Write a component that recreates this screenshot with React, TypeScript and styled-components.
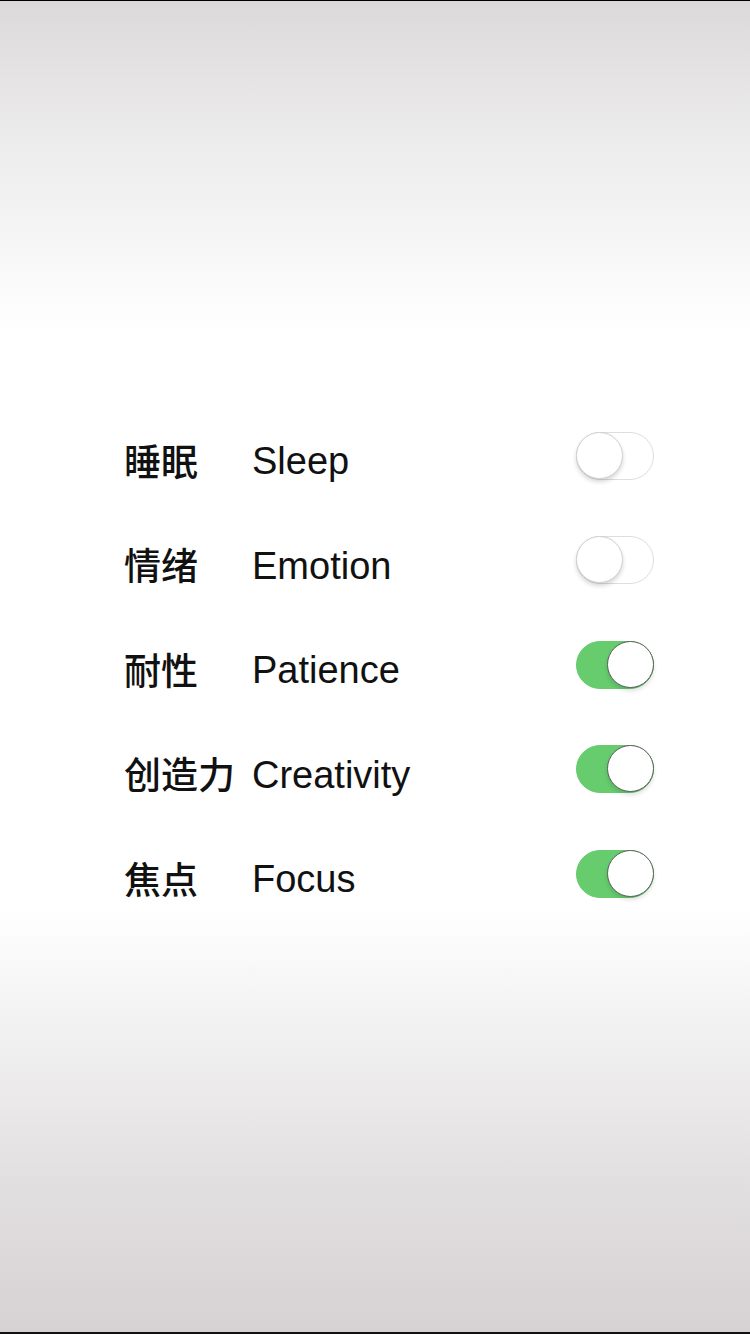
import styled, {createGlobalStyle} from "styled-components";

const GlobalStyle = createGlobalStyle`
    html, body {
        margin: 0;
        padding: 0;
    }
    body {
        font-family: "Liberation Sans", "Noto Sans CJK SC", sans-serif;
        -webkit-font-smoothing: antialiased;
    }
`;

interface Setting {
    zh: string;
    en: string;
    on: boolean;
}

const settings: Setting[] = [
    {zh: "睡眠", en: "Sleep", on: false},
    {zh: "情绪", en: "Emotion", on: false},
    {zh: "耐性", en: "Patience", on: true},
    {zh: "创造力", en: "Creativity", on: true},
    {zh: "焦点", en: "Focus", on: true},
];

export default function App() {
    return <>
        <GlobalStyle />
        <Screen>
            <List>
                {settings.map(s => (
                    <Row key={s.en}>
                        <ZhLabel>{s.zh}</ZhLabel>
                        <EnLabel>{s.en}</EnLabel>
                        <Switch $on={s.on}>
                            <Knob $on={s.on} />
                        </Switch>
                    </Row>
                ))}
            </List>
        </Screen>
    </>;
}

const Screen = styled.div`
    box-sizing: border-box;
    width: 750px;
    height: 1334px;
    border-top: 1px solid #000;
    border-bottom: 2px solid #111;
    background: linear-gradient(
        to bottom,
        #dcd9da 0%,
        #ecebec 10%,
        #ffffff 25%,
        #ffffff 68%,
        #f1f0f0 78%,
        #e3e0e1 88%,
        #d6d2d3 100%
    );
    display: flex;
    flex-direction: column;
    justify-content: center;
    padding: 0 96px 4px 124px;
`;

const List = styled.div`
    display: flex;
    flex-direction: column;
`;

const Row = styled.div`
    height: 104.5px;
    display: grid;
    grid-template-columns: 128px 1fr auto;
    align-items: center;
`;

const Label = styled.span`
    line-height: 44px;
    color: #111;
    white-space: nowrap;
`;

const ZhLabel = styled(Label)`
    font-family: "Noto Sans CJK SC", sans-serif;
    font-size: 37px;
    font-weight: 500;
    padding-top: 8px;
`;

const EnLabel = styled(Label)`
    font-family: "Liberation Sans", Arial, sans-serif;
    font-size: 38px;
    padding-top: 11px;
`;

const Switch = styled.div<{$on: boolean}>`
    position: relative;
    box-sizing: border-box;
    width: 78px;
    height: 48px;
    border-radius: 24px;
    background: ${p => p.$on ? "#66cc6e" : "#fff"};
    border: 1.5px solid ${p => p.$on ? "#66cc6e" : "#dedede"};
`;

const Knob = styled.div<{$on: boolean}>`
    position: absolute;
    top: -1px;
    ${p => p.$on ? "right: -1px;" : "left: -1px;"}
    box-sizing: border-box;
    width: 47px;
    height: 47px;
    border-radius: 50%;
    background: #fff;
    border: ${p => p.$on ? "1.5px solid #556255" : "1px solid #d0d0d0"};
    box-shadow: 0 3px 4px rgba(0, 0, 0, ${p => p.$on ? 0.12 : 0.16});
`;
